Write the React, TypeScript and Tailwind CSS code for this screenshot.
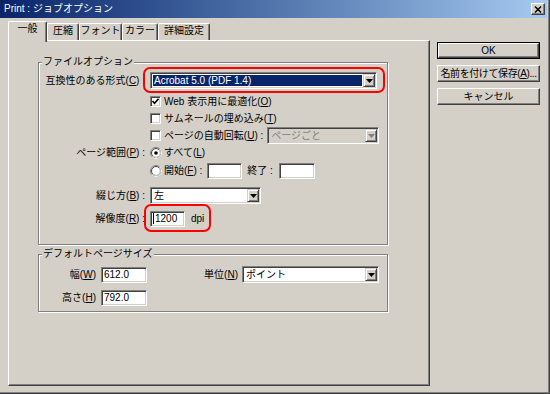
import React from "react";

type Kids = { children?: React.ReactNode };

function Sunken({ className = "", children }: { className?: string } & Kids) {
  return (
    <div
      className={`border border-[#808080] border-b-white border-r-white shadow-[inset_1px_1px_0_#404040,inset_-1px_-1px_0_#d4d0c8] ${className}`}
    >
      {children}
    </div>
  );
}

function M({ children }: Kids) {
  return <span className="underline underline-offset-[1px]">{children}</span>;
}

function DropArrow({ disabled = false }: { disabled?: boolean }) {
  return (
    <div className="w-[12px] h-full flex items-center justify-center bg-[#d4d0c8] border border-[#d4d0c8] border-b-[#404040] border-r-[#404040] shadow-[inset_1px_1px_0_#fff,inset_-1px_-1px_0_#808080]">
      <svg width="7" height="4" viewBox="0 0 7 4">
        <path d="M0 0h7L3.5 4z" fill={disabled ? "#808080" : "#000"} />
      </svg>
    </div>
  );
}

function Combo({
  w,
  value,
  selected = false,
  disabled = false,
}: {
  w: string;
  value: string;
  selected?: boolean;
  disabled?: boolean;
}) {
  return (
    <Sunken className={`${w} h-[17px] flex p-[1px] ${disabled ? "bg-[#d4d0c8]" : "bg-white"}`}>
      <div
        className={`flex-1 flex items-center whitespace-nowrap overflow-hidden ${
          selected ? "bg-[#0a246a] text-white m-[1px] pl-[1px]" : "pl-[2px]"
        } ${disabled ? "text-[#808080]" : ""}`}
      >
        {value}
      </div>
      <DropArrow disabled={disabled} />
    </Sunken>
  );
}

function Field({ w, value, caret = false }: { w: string; value?: string; caret?: boolean }) {
  return (
    <Sunken className={`${w} h-[16px] bg-white flex items-center pl-[2px] shrink-0`}>
      {caret && <span className="w-px h-[11px] bg-black mr-[1px]" />}
      {value}
    </Sunken>
  );
}

function Check({ checked = false }: { checked?: boolean }) {
  return (
    <Sunken className="w-[11px] h-[11px] bg-white flex items-center justify-center shrink-0">
      {checked && (
        <svg width="7" height="7" viewBox="0 0 7 7">
          <path d="M0.5 3l2 2.2L6.5 0.8" stroke="#000" strokeWidth="1.6" fill="none" />
        </svg>
      )}
    </Sunken>
  );
}

function Radio({ on = false }: { on?: boolean }) {
  return (
    <svg width="12" height="12" viewBox="0 0 12 12" className="shrink-0">
      <circle cx="6" cy="6" r="5.5" fill="#fff" stroke="#808080" />
      <path d="M9.9 2.1A5.5 5.5 0 0 1 2.1 9.9" stroke="#fff" fill="none" />
      <circle cx="6" cy="6" r="4.5" fill="none" stroke="#404040" />
      <path d="M9.2 2.8A4.5 4.5 0 0 1 2.8 9.2" stroke="#d4d0c8" fill="none" />
      {on && <circle cx="6" cy="6" r="1.8" fill="#000" />}
    </svg>
  );
}

function Row({ label, w = "w-[106px]", className = "", children }: { label?: React.ReactNode; w?: string; className?: string } & Kids) {
  return (
    <div className={`flex items-center h-[17px] ${className}`}>
      <div className={`${w} shrink-0 text-right whitespace-nowrap`}>{label}</div>
      <div className="ml-[5px] flex items-center whitespace-nowrap">{children}</div>
    </div>
  );
}

function Button({ children, isDefault = false }: { isDefault?: boolean } & Kids) {
  return (
    <div className={`h-[17px] ${isDefault ? "border border-black" : ""}`}>
      <div className="h-full flex items-center justify-center whitespace-nowrap border border-white border-b-[#404040] border-r-[#404040] shadow-[inset_-1px_-1px_0_#808080]">
        {children}
      </div>
    </div>
  );
}

function Tab({ label, w, active = false }: { label: string; w: string; active?: boolean }) {
  return (
    <div
      className={`${w} flex justify-center pt-[1px] bg-[#d4d0c8] border-t border-l border-r border-white border-r-[#404040] shadow-[inset_-1px_0_0_#808080] rounded-t-[2px] ${
        active ? "h-[21px] -mb-[2px] relative z-10" : "h-[17px]"
      }`}
    >
      {label}
    </div>
  );
}

const groupCls =
  "w-[350px] border border-[#808080] shadow-[inset_1px_1px_0_#fff,1px_1px_0_#fff]";

export default function App() {
  return (
    <div className="w-[550px] h-[394px] bg-[#d4d0c8] flex flex-col overflow-hidden font-['Liberation_Sans','Noto_Sans_CJK_JP',sans-serif] text-[10px] leading-[12px] text-black shadow-[inset_-1px_-1px_0_#404040,inset_-2px_-2px_0_#808080]">
      <div className="h-[18px] mr-[3px] flex items-center bg-linear-to-r from-[#0a246a] to-[#a6caf0] pl-[4px] pr-[2px]">
        <span className="flex-1 text-white">Print : ジョブオプション</span>
        <div className="w-[14px] h-[12px] flex items-center justify-center bg-[#d4d0c8] border border-white border-b-[#404040] border-r-[#404040] shadow-[inset_-1px_-1px_0_#808080]">
          <svg width="8" height="7" viewBox="0 0 8 7">
            <path d="M1 0.5l6 6M7 0.5l-6 6" stroke="#000" strokeWidth="1.5" />
          </svg>
        </div>
      </div>

      <div className="flex pl-[8px] pt-[3px]">
        <div className="w-[422px] flex flex-col">
          <div className="h-[19px] flex items-end">
            <Tab label="一般" w="w-[39px]" active />
            <Tab label="圧縮" w="w-[32px]" />
            <Tab label="フォント" w="w-[43px]" />
            <Tab label="カラー" w="w-[36px]" />
            <Tab label="詳細設定" w="w-[52px]" />
          </div>

          <div className="h-[346px] border border-white border-b-[#404040] border-r-[#404040] shadow-[inset_-1px_-1px_0_#808080] pl-[29px] pt-[15px]">
            <fieldset className={groupCls}>
              <legend className="ml-[3px] px-[1px] bg-[#d4d0c8]">ファイルオプション</legend>
              <div className="pt-[4px] pb-[17px] flex flex-col">
                <Row label={<>互換性のある形式(<M>C</M>) :</>}>
                  <div className="relative">
                    <Combo w="w-[227px]" value="Acrobat 5.0 (PDF 1.4)" selected />
                    <span className="absolute -left-[7px] -right-[8px] -top-[5px] -bottom-[4px] border-2 border-[#ff0000] rounded-[7px] pointer-events-none" />
                  </div>
                </Row>
                <Row className="mt-[4px]">
                  <Check checked />
                  <span className="ml-[3px]">Web 表示用に最適化(<M>O</M>)</span>
                </Row>
                <Row>
                  <Check />
                  <span className="ml-[3px]">サムネールの埋め込み(<M>T</M>)</span>
                </Row>
                <Row>
                  <Check />
                  <span className="ml-[3px]">ページの自動回転(<M>U</M>) :</span>
                  <div className="ml-[4px]">
                    <Combo w="w-[112px]" value="ページごと" disabled />
                  </div>
                </Row>
                <Row label={<>ページ範囲(<M>P</M>) :</>}>
                  <Radio on />
                  <span className="ml-[2px]">すべて(<M>L</M>)</span>
                </Row>
                <Row className="mt-[1px]">
                  <Radio />
                  <span className="ml-[2px]">開始(<M>F</M>) :</span>
                  <div className="ml-[5px]">
                    <Field w="w-[35px]" />
                  </div>
                  <span className="ml-[5px]">終了 :</span>
                  <div className="ml-[6px]">
                    <Field w="w-[36px]" />
                  </div>
                </Row>
                <Row className="mt-[8px]" label={<>綴じ方(<M>B</M>) :</>}>
                  <Combo w="w-[111px]" value="左" />
                </Row>
                <Row className="mt-[6px]" label={<>解像度(<M>R</M>) :</>}>
                  <div className="relative flex items-center">
                    <Field w="w-[35px]" value="1200" caret />
                    <span className="ml-[6px]">dpi</span>
                    <span className="absolute -left-[6px] -right-[7px] -top-[7px] -bottom-[5px] border-2 border-[#ff0000] rounded-[7px] pointer-events-none" />
                  </div>
                </Row>
              </div>
            </fieldset>

            <fieldset className={`${groupCls} mt-[3px]`}>
              <legend className="ml-[3px] px-[1px] bg-[#d4d0c8]">デフォルトページサイズ</legend>
              <div className="pt-[6px] pb-[5px] flex flex-col">
                <Row w="w-[57px]" label={<>幅(<M>W</M>)</>}>
                  <Field w="w-[46px]" value="612.0" />
                  <div className="w-[95px] text-right pr-[4px]">
                    単位(<M>N</M>)
                  </div>
                  <Combo w="w-[137px]" value="ポイント" />
                </Row>
                <Row w="w-[57px]" className="mt-[6px]" label={<>高さ(<M>H</M>)</>}>
                  <Field w="w-[46px]" value="792.0" />
                </Row>
              </div>
            </fieldset>
          </div>
        </div>

        <div className="ml-[7px] w-[103px] pt-[21px] flex flex-col gap-[6px]">
          <Button isDefault>OK</Button>
          <Button>
            <span className="tracking-[-0.4px]">
              名前を付けて保存(<M>A</M>)...
            </span>
          </Button>
          <Button>キャンセル</Button>
        </div>
      </div>
    </div>
  );
}
